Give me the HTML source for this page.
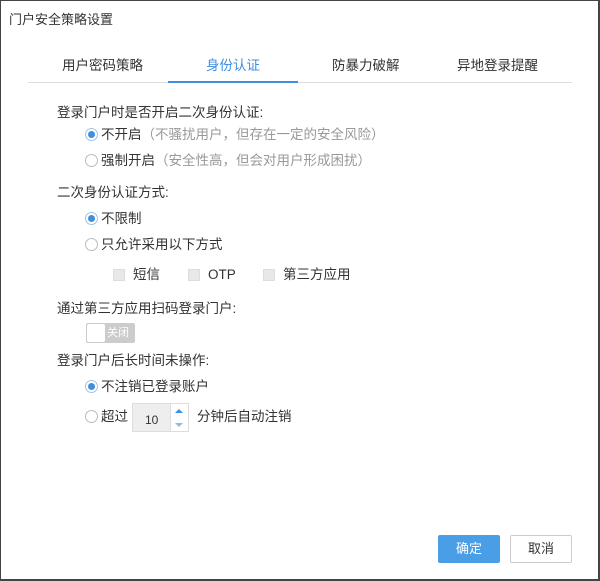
<!DOCTYPE html>
<html><head><meta charset="utf-8"><style>
*{margin:0;padding:0;box-sizing:border-box}
body{width:600px;height:581px;background:#fff;font-family:"Liberation Sans","Noto Sans CJK SC",sans-serif;font-size:13px;color:#333;position:relative;overflow:hidden}
.frame{position:absolute;left:0;top:0;width:600px;height:581px;border:1px solid #444;border-right:2px solid #444;border-bottom:2px solid #444}
.a{position:absolute;white-space:nowrap;line-height:16px}
.r{position:absolute;width:13px;height:13px;border:1px solid #bbb;border-radius:50%;background:#fff}
.r.on::after{content:"";position:absolute;left:2px;top:2px;width:7px;height:7px;border-radius:50%;background:#3d8fe0}
.r.on{border-color:#9cc4ea}
.c{position:absolute;width:12px;height:12px;border:1px solid #ddd;background:#e8e8e8}
.g{color:#999}
.t{font-size:13.5px}
</style></head><body>
<div class="frame"></div>
<div class="a" style="left:9px;top:12px">门户安全策略设置</div>
<div class="a" style="left:62px;top:58px;font-size:13.5px">用户密码策略</div>
<div class="a" style="left:206px;top:58px;font-size:13.5px;color:#3d8fe0">身份认证</div>
<div class="a" style="left:332px;top:58px;font-size:13.5px">防暴力破解</div>
<div class="a" style="left:457px;top:58px;font-size:13.5px">异地登录提醒</div>
<div style="position:absolute;left:28px;top:82px;width:544px;height:1px;background:#ddd"></div>
<div style="position:absolute;left:168px;top:81px;width:130px;height:2px;background:#3d8fe0"></div>

<div class="a t" style="left:57px;top:105px">登录门户时是否开启二次身份认证:</div>
<div class="r on" style="left:85px;top:128px"></div>
<div class="a t" style="left:101px;top:127px">不开启<span class="g">（不骚扰用户，但存在一定的安全风险）</span></div>
<div class="r" style="left:85px;top:154px"></div>
<div class="a t" style="left:101px;top:153px">强制开启<span class="g">（安全性高，但会对用户形成困扰）</span></div>

<div class="a t" style="left:57px;top:185px">二次身份认证方式:</div>
<div class="r on" style="left:85px;top:212px"></div>
<div class="a t" style="left:101px;top:211px">不限制</div>
<div class="r" style="left:85px;top:238px"></div>
<div class="a t" style="left:101px;top:237px">只允许采用以下方式</div>
<div class="c" style="left:113px;top:269px"></div>
<div class="a t" style="left:133px;top:267px">短信</div>
<div class="c" style="left:188px;top:269px"></div>
<div class="a t" style="left:208px;top:267px">OTP</div>
<div class="c" style="left:263px;top:269px"></div>
<div class="a t" style="left:283px;top:267px">第三方应用</div>

<div class="a t" style="left:57px;top:301px">通过第三方应用扫码登录门户:</div>
<div style="position:absolute;left:86px;top:323px;width:49px;height:20px;background:#ccc;border-radius:2px"></div>
<div style="position:absolute;left:87px;top:324px;width:18px;height:18px;background:#fff;border-radius:2px"></div>
<div class="a" style="left:107px;top:325px;color:#fff;font-size:11px">关闭</div>

<div class="a t" style="left:57px;top:353px">登录门户后长时间未操作:</div>
<div class="r on" style="left:85px;top:380px"></div>
<div class="a t" style="left:101px;top:379px">不注销已登录账户</div>
<div class="r" style="left:85px;top:410px"></div>
<div class="a t" style="left:101px;top:409px">超过</div>
<div style="position:absolute;left:132px;top:403px;width:57px;height:29px;background:#eee;border:1px solid #ddd"></div>
<div class="a" style="left:145px;top:412px;font-size:12px">10</div>
<div style="position:absolute;left:170px;top:404px;width:18px;height:27px;background:#fff;border-left:1px solid #ddd"></div>
<div style="position:absolute;left:175px;top:409px;border:4px solid transparent;border-bottom:4px solid #3d8fe0;border-top:0"></div>
<div style="position:absolute;left:175px;top:423px;border:4px solid transparent;border-top:4px solid #8cbbea;border-bottom:0"></div>
<div class="a t" style="left:197px;top:409px">分钟后自动注销</div>

<div style="position:absolute;left:438px;top:535px;width:62px;height:28px;background:#4a9ee5;border-radius:2px;color:#fff;text-align:center;line-height:28px">确定</div>
<div style="position:absolute;left:510px;top:535px;width:62px;height:28px;background:#fff;border:1px solid #ccc;border-radius:2px;text-align:center;line-height:26px">取消</div>
</body></html>
